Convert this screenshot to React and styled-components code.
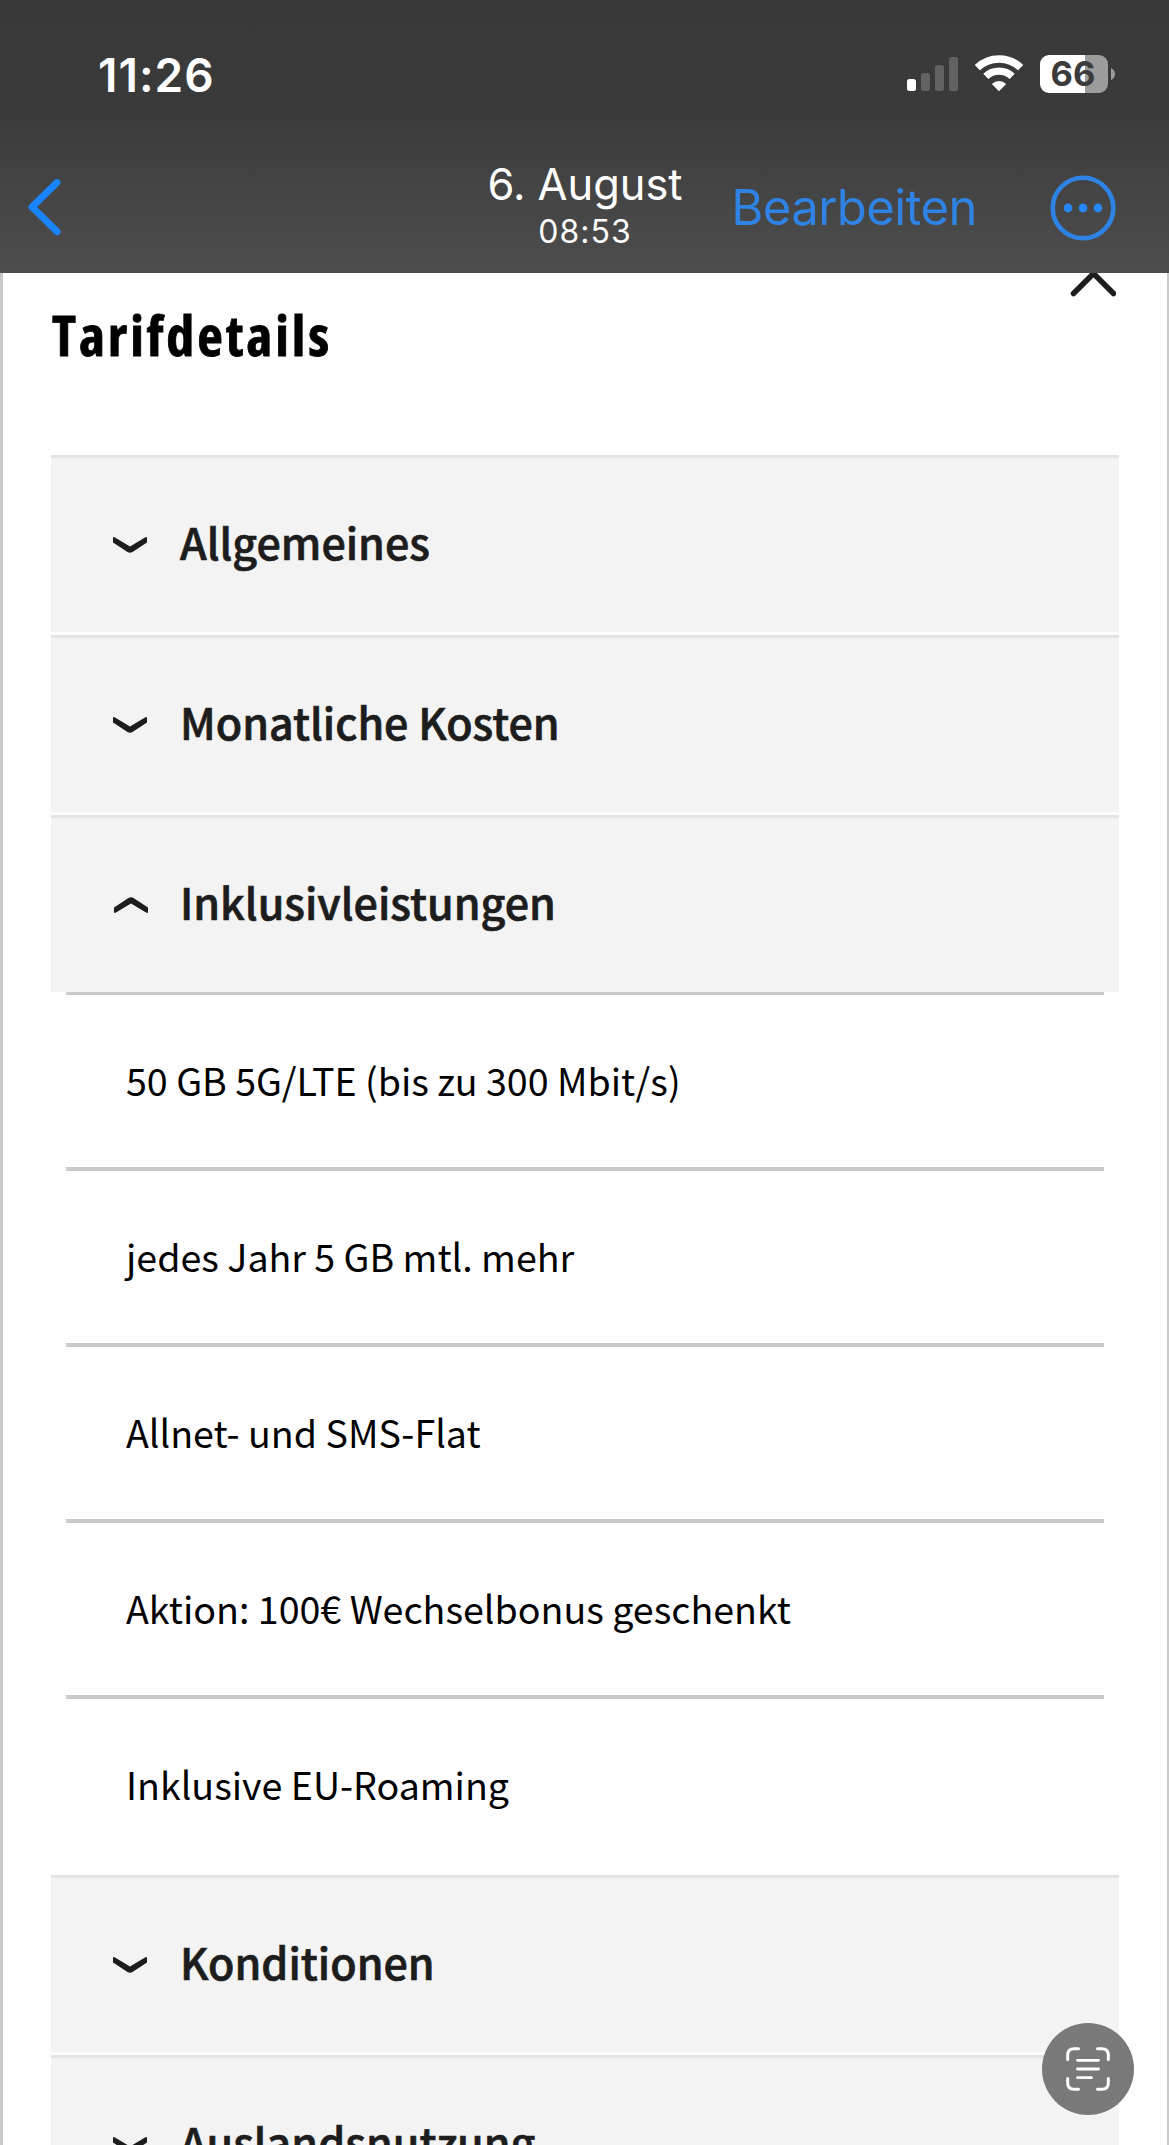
import styled, { createGlobalStyle } from 'styled-components'
import { useState } from 'react'

const sections = [
  { title: 'Allgemeines', rows: [] },
  { title: 'Monatliche Kosten', rows: [] },
  {
    title: 'Inklusivleistungen',
    rows: [
      '50 GB 5G/LTE (bis zu 300 Mbit/s)',
      'jedes Jahr 5 GB mtl. mehr',
      'Allnet- und SMS-Flat',
      'Aktion: 100€ Wechselbonus geschenkt',
      'Inklusive EU-Roaming',
    ],
  },
  { title: 'Konditionen', rows: [] },
  { title: 'Auslandsnutzung', rows: [] },
]

const StatusIcons = () => (
  <svg width='210' height='42' viewBox='0 0 210 42'>
    <rect x='2' y='27' width='9' height='12' rx='2.5' fill='#fff' />
    <g fill='#626263'>
      <rect x='16' y='21' width='9' height='18' rx='2.5' />
      <rect x='30' y='13' width='9' height='26' rx='2.5' />
      <rect x='44' y='5' width='9' height='34' rx='2.5' />
    </g>
    <g fill='none' stroke='#fff' strokeWidth='7.4'>
      <path d='M72.3 15.6 A31.5 31.5 0 0 1 115.7 15.6' />
      <path d='M80.8 24.4 A19.2 19.2 0 0 1 107.2 24.4' />
    </g>
    <path d='M94 39 L87.2 32 A10 10 0 0 1 100.8 32 Z' fill='#fff' stroke='#fff' strokeWidth='0.6' strokeLinejoin='round' />
    <path d='M144 3 H180 V41 H144 A9 9 0 0 1 135 32 V12 A9 9 0 0 1 144 3 Z' fill='#fff' />
    <path d='M180 3 H194 A9 9 0 0 1 203 12 V32 A9 9 0 0 1 194 41 H180 Z' fill='#9c9c9c' />
    <path d='M206 16 Q210 18 210 22 Q210 26 206 28 Z' fill='#9c9c9c' />
    <text x='168' y='34.3' textAnchor='middle' fontFamily='Inter, sans-serif' fontSize='34.5' fontWeight='650' fill='#3b3b3c'>66</text>
  </svg>
)

const App = () => {
  const [open, setOpen] = useState('Inklusivleistungen')

  const toggle = (title) => {
    setOpen((prev) => (prev === title ? '' : title))
  }

  return (
    <>
      <GlobalStyle />
      <Screen>
        <TopBar>
          <StatusBar>
            <Clock>11:26</Clock>
            <StatusIcons />
          </StatusBar>
          <NavBar>
            <IconButton>
              <svg width='35' height='58' viewBox='0 0 35 58'>
                <path d='M30 3.5 L5 28 L30 52.5' fill='none' stroke='#1a84ff' strokeWidth='7' strokeLinecap='round' strokeLinejoin='round' />
              </svg>
            </IconButton>
            <DateTitle>
              <Day>6. August</Day>
              <Hour>08:53</Hour>
            </DateTitle>
            <Actions>
              <EditButton>Bearbeiten</EditButton>
              <IconButton>
                <svg width='66' height='66' viewBox='0 0 66 66'>
                  <circle cx='33' cy='33' r='30.3' fill='none' stroke='#2f83e4' strokeWidth='4.6' />
                  <g fill='#2488f8'>
                    <circle cx='18' cy='33' r='4.4' />
                    <circle cx='33' cy='33' r='4.4' />
                    <circle cx='48' cy='33' r='4.4' />
                  </g>
                </svg>
              </IconButton>
            </Actions>
          </NavBar>
        </TopBar>

        <Page>
          <TitleRow>
            <Title>Tarifdetails</Title>
            <svg width='46' height='26' viewBox='0 0 46 26'>
              <path d='M3.5 20.5 L23.5 0.5 L43.5 20.5' fill='none' stroke='#1d1d1d' strokeWidth='5.6' strokeLinecap='round' />
            </svg>
          </TitleRow>
          {sections.map(({ title, rows }) => (
            <Section key={title} $open={open === title}>
              <SectionHead onClick={() => toggle(title)}>
                <Chevron $open={open === title} width='34' height='16' viewBox='0 0 34 16'>
                  <path d='M0 1 Q0 -0.6 2 0.4 L17 9.5 L32 0.4 Q34 -0.6 34 1 V5.5 L19.5 15 Q17 16.6 14.5 15 L0 5.5 Z' />
                </Chevron>
                <HeadText>{title}</HeadText>
              </SectionHead>
              {open === title && (
                <Rows>
                  {rows.map((row) => (
                    <Row key={row}>{row}</Row>
                  ))}
                </Rows>
              )}
            </Section>
          ))}
        </Page>

        <ScanButton>
          <svg width='44' height='44' viewBox='0 0 44 44' fill='none' stroke='#fff' strokeWidth='3' strokeLinecap='round'>
            <path d='M1.7 12.5 V8 Q1.7 1.7 8 1.7 H12.5' />
            <path d='M31.5 1.7 H36 Q42.3 1.7 42.3 8 V12.5' />
            <path d='M42.3 31.5 V36 Q42.3 42.3 36 42.3 H31.5' />
            <path d='M12.5 42.3 H8 Q1.7 42.3 1.7 36 V31.5' />
            <path d='M11.5 13.3 H32.5' strokeWidth='2.8' />
            <path d='M11.5 22 H32.5' strokeWidth='2.8' />
            <path d='M11.5 30.7 H25.5' strokeWidth='2.8' />
          </svg>
        </ScanButton>
      </Screen>
    </>
  )
}

export default App

const GlobalStyle = createGlobalStyle`
  * {
    box-sizing: border-box;
  }
  body {
    margin: 0;
    background: #fefefe;
  }
  button {
    padding: 0;
    border: none;
    background: none;
    cursor: pointer;
  }
  svg {
    display: block;
    flex-shrink: 0;
  }
`
const Screen = styled.div`
  position: relative;
  width: 1169px;
  height: 2145px;
  display: flex;
  flex-direction: column;
  overflow: hidden;
  font-family: Inter, sans-serif;
`
const TopBar = styled.header`
  height: 273px;
  flex-shrink: 0;
  background: linear-gradient(#39393a 0%, #3a3a3b 40%, #434343 66%, #4d4d4d 100%);
`
const StatusBar = styled.div`
  height: 144px;
  padding: 52px 54px 0 98px;
  display: flex;
  justify-content: space-between;
  align-items: flex-start;
`
const Clock = styled.div`
  font-size: 46px;
  line-height: 46px;
  letter-spacing: 1px;
  font-weight: 600;
  color: #fff;
`
const NavBar = styled.div`
  height: 128px;
  padding: 0 53px 0 27px;
  display: grid;
  grid-template-columns: 458px 200px 1fr;
  align-items: center;
`
const IconButton = styled.button`
  justify-self: start;
`
const DateTitle = styled.div`
  padding-bottom: 5px;
  display: flex;
  flex-direction: column;
  align-items: center;
  color: #fff;
`
const Day = styled.div`
  font-size: 43.4px;
  line-height: 53px;
  white-space: nowrap;
`
const Hour = styled.div`
  font-size: 32px;
  line-height: 42px;
  letter-spacing: 1px;
`
const Actions = styled.div`
  display: flex;
  justify-content: flex-end;
  align-items: center;
  gap: 73px;
`
const EditButton = styled.button`
  padding-bottom: 2px;
  font-family: inherit;
  font-size: 49px;
  letter-spacing: -0.55px;
  color: #2f83e4;
`
const Page = styled.main`
  flex: 1;
  padding: 0 48px;
  border-left: 3px solid #c9c9c9;
  border-right: 2px solid #c9c9c9;
  font-family: "Noto Sans CJK SC", sans-serif;
`
const TitleRow = styled.div`
  height: 182px;
  padding-right: 3px;
  display: flex;
  justify-content: space-between;
`
const Title = styled.h1`
  margin: 23px 0 0 1px;
  font-family: "Open Sans", sans-serif;
  font-stretch: 75%;
  font-size: 56px;
  line-height: 76px;
  letter-spacing: 2.9px;
  font-weight: 750;
  color: #000;
  -webkit-text-stroke: 0.8px #000;
`
const Section = styled.section`
  margin-bottom: ${({ $open }) => ($open ? '0' : '3px')};
`
const SectionHead = styled.div`
  height: 177px;
  padding-left: 62px;
  display: flex;
  align-items: center;
  gap: 33px;
  border-top: 3px solid #e3e3e3;
  background-color: #f3f3f3;
  cursor: pointer;
`
const HeadText = styled.span`
  padding-bottom: 9px;
  font-size: 43px;
  line-height: 60px;
  font-weight: 500;
  color: #1d1d1d;
  -webkit-text-stroke: 0.7px #1d1d1d;
`
const Chevron = styled.svg`
  fill: #1d1d1d;
  transform: ${({ $open }) => ($open ? 'translateX(1px) rotate(180deg)' : 'none')};
`
const Rows = styled.div`
  margin: 0 15px;
  border-top: 3px solid #c9c9c9;
`
const Row = styled.div`
  height: 176px;
  padding: 0 60px 2px;
  display: flex;
  align-items: center;
  border-bottom: 4px solid #c9c9c9;
  font-size: 37.6px;
  line-height: 54px;
  color: #000;

  &:last-child {
    border-bottom-color: transparent;
  }
`
const ScanButton = styled.button`
  position: absolute;
  right: 35px;
  bottom: 30px;
  width: 92px;
  height: 92px;
  display: flex;
  align-items: center;
  justify-content: center;
  border-radius: 50%;
  background-color: #797979;
`
